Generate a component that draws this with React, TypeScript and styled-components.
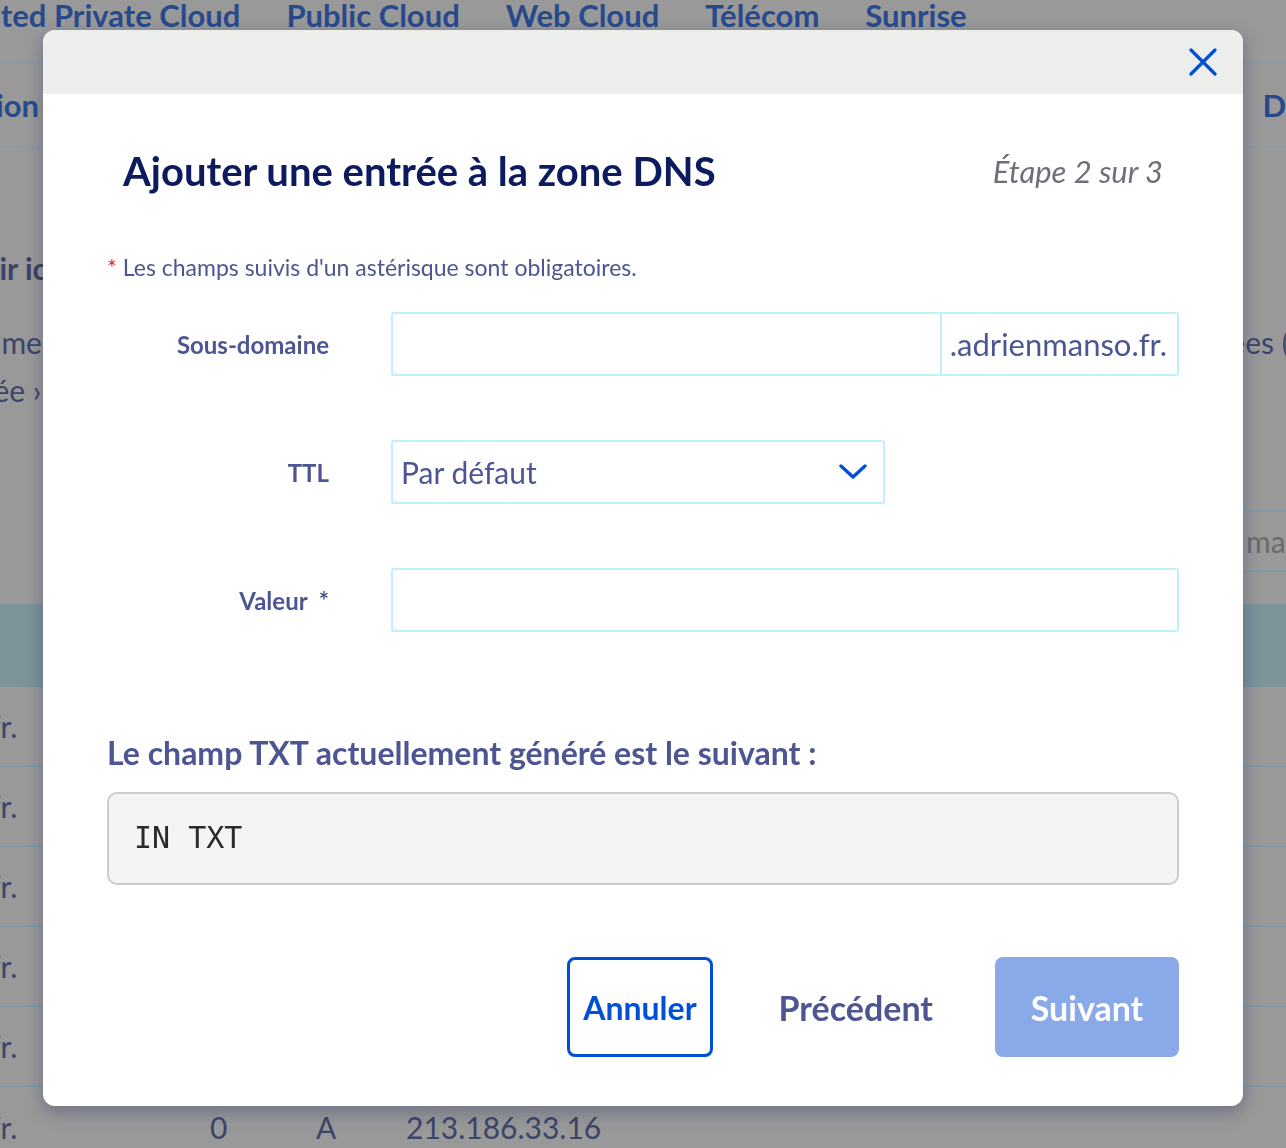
import * as React from "react";
import styled, { createGlobalStyle } from "styled-components";

const font = `Lato, "Noto Sans", sans-serif`;

const GlobalStyle = createGlobalStyle`
    html, body {
        margin: 0;
        padding: 0;
        width: 1286px;
        height: 1148px;
        overflow: hidden;
        background: #999999;
        font-family: ${font};
    }
    * { box-sizing: border-box; }
`;

/* ---------- dimmed page behind the dialog ---------- */

const Page = styled.div`
    width: 1286px;
    height: 1148px;
    overflow: hidden;
    background: #999999;
    display: flex;
    flex-direction: column;
    & > * { flex-shrink: 0; }
`;

const TopNav = styled.div`
    height: 61px;
    display: flex;
    gap: 46px;
    margin-left: -54px;
`;

const NavItem = styled.span`
    font: 700 31px/30px ${font};
    color: #284a8d;
    white-space: nowrap;
`;

const SubNav = styled.div`
    height: 87px;
    border-top: 2px solid #8f98a6;
    border-bottom: 2px solid #8f98a6;
    display: flex;
    justify-content: space-between;
    align-items: center;
    margin-left: -124px;
    margin-right: -24px;
`;

const SubNavItem = styled.span`
    font: 700 31px ${font};
    color: #284a8d;
`;

const Body = styled.div`
    height: 456px;
    display: flex;
    justify-content: space-between;
`;

const BodyLeft = styled.div`
    margin-left: -60px;
    padding-top: 103px;
    display: flex;
    flex-direction: column;
    gap: 33px;
`;

const BgTitle = styled.div`
    font: 700 30px/34px ${font};
    color: #3a4466;
    white-space: nowrap;
`;

const BgText = styled.div`
    font: 400 30px/48px ${font};
    color: #3d4568;
    white-space: nowrap;
`;

const BodyRight = styled.div`
    display: flex;
    flex-direction: column;
    align-items: flex-end;
    margin-right: -32px;
    padding-top: 170px;
`;

const BgInput = styled.div`
    margin-top: 144px;
    margin-right: -28px;
    height: 62px;
    width: 170px;
    border-top: 2px solid #7d9aa6;
    border-bottom: 2px solid #7d9aa6;
    font: 400 30px/58px ${font};
    color: #6b6b6b;
    padding-left: 70px;
`;

const TableHead = styled.div`
    height: 83px;
    background: #7b9399;
`;

const TableRow = styled.div<{ last?: boolean }>`
    height: 80px;
    border-bottom: ${(p) => (p.last ? "none" : "2px solid #7d9aa6")};
    display: flex;
    align-items: center;
    margin-left: -10px;
    font: 400 30px ${font};
    color: #3d4568;
`;

const Cell = styled.span<{ w: number }>`
    width: ${(p) => p.w}px;
    white-space: nowrap;
`;

/* ---------- dialog ---------- */

const Overlay = styled.div`
    position: fixed;
    inset: 0;
    display: flex;
    justify-content: center;
    padding-top: 30px;
`;

const Dialog = styled.div`
    width: 1200px;
    height: 1076px;
    background: #ffffff;
    border-radius: 12px;
    box-shadow: 0 6px 18px rgba(30, 40, 90, 0.35);
    display: flex;
    flex-direction: column;
    overflow: hidden;
`;

const DialogHeader = styled.div`
    height: 64px;
    flex-shrink: 0;
    background: #eceeec;
    display: flex;
    justify-content: flex-end;
    align-items: center;
    padding-right: 24px;
`;

const CloseButton = styled.button`
    border: none;
    background: transparent;
    padding: 0;
    width: 32px;
    height: 32px;
    display: flex;
    align-items: center;
    justify-content: center;
    cursor: pointer;
`;

const DialogBody = styled.div`
    padding: 0 64px;
    display: flex;
    flex-direction: column;
`;

const TitleRow = styled.div`
    display: flex;
    justify-content: space-between;
    align-items: center;
    padding: 44px 16px 0 16px;
    height: 110px;
`;

const Title = styled.h2`
    margin: 0;
    font: 700 40px ${font};
    color: #0c1b5e;
`;

const Step = styled.span`
    font: italic 400 31px ${font};
    color: #6c7079;
`;

const RequiredNote = styled.p`
    margin: 49px 0 0 0;
    font: 400 23px/28px ${font};
    color: #4d5592;
`;

const Star = styled.span`
    color: #e2252f;
    margin-right: 6px;
`;

const Form = styled.div`
    display: flex;
    flex-direction: column;
    gap: 64px;
    margin-top: 31px;
`;

const FieldRow = styled.div`
    display: grid;
    grid-template-columns: 222px 1fr;
    gap: 62px;
    align-items: center;
`;

const Label = styled.label`
    text-align: right;
    font: 700 24px ${font};
    color: #4d5592;
    white-space: nowrap;
`;

const InputGroup = styled.div<{ width?: number }>`
    display: flex;
    height: 64px;
    width: ${(p) => (p.width ? `${p.width}px` : "100%")};
    border: 2px solid #bef1fb;
    border-radius: 3px;
`;

const TextInput = styled.input`
    flex: 1;
    min-width: 0;
    border: none;
    outline: none;
    background: transparent;
    font: 400 30px ${font};
    color: #4d5592;
    padding: 0 8px;
`;

const Suffix = styled.span`
    border-left: 2px solid #bef1fb;
    display: flex;
    align-items: center;
    padding: 0 10px 0 8px;
    font: 400 31px ${font};
    color: #4d5592;
`;

const SelectBox = styled.div`
    flex: 1;
    display: flex;
    align-items: center;
    justify-content: space-between;
    padding: 0 16px 0 8px;
    font: 400 30px ${font};
    color: #4d5592;
`;

const SectionTitle = styled.h3`
    margin: 102px 0 0 0;
    font: 700 32px/38px ${font};
    color: #4d5592;
`;

const CodeBox = styled.pre`
    margin: 20px 0 0 0;
    height: 93px;
    background: #f4f4f4;
    border: 2px solid #cccccc;
    border-radius: 10px;
    padding: 0 25px 2px 25px;
    display: flex;
    align-items: center;
    font: 400 30px "DejaVu Sans Mono", "Liberation Mono", monospace;
    color: #2b2b2b;
`;

const Actions = styled.div`
    display: flex;
    justify-content: flex-end;
    align-items: center;
    margin-top: 72px;
`;

type Variant = "outline" | "ghost" | "primary";

const Button = styled.button<{ variant: Variant }>`
    height: 100px;
    border-radius: 8px;
    font: 700 ${(p) => (p.variant === "outline" ? 32 : 34)}px ${font};
    cursor: pointer;
    padding: ${(p) => (p.variant === "ghost" ? "0" : "0 13px")};
    border: ${(p) => (p.variant === "outline" ? "3px solid #0050d7" : "none")};
    background: ${(p) => (p.variant === "primary" ? "#89a9e8" : "transparent")};
    color: ${(p) =>
        p.variant === "outline" ? "#0050d7" : p.variant === "primary" ? "#ffffff" : "#4d5592"};
    margin-left: ${(p) => (p.variant === "outline" ? 0 : p.variant === "ghost" ? 66 : 62)}px;
    min-width: ${(p) => (p.variant === "primary" ? 184 : 0)}px;
`;

const CloseIcon = () => (
    <svg width="28" height="28" viewBox="0 0 28 28">
        <path d="M2 2 L26 26 M26 2 L2 26" stroke="#0050d7" strokeWidth="3.2" strokeLinecap="round" />
    </svg>
);

const Chevron = () => (
    <svg width="28" height="18" viewBox="0 0 28 18">
        <path d="M2 3 L14 14 L26 3" fill="none" stroke="#0050d7" strokeWidth="3.4" strokeLinecap="round" strokeLinejoin="round" />
    </svg>
);

export default function App() {
    const rows = ["fr.", "fr.", "fr.", "fr.", "fr."];
    return (
        <>
            <GlobalStyle />
            <Page>
                <TopNav>
                    <NavItem>Hosted Private Cloud</NavItem>
                    <NavItem>Public Cloud</NavItem>
                    <NavItem>Web Cloud</NavItem>
                    <NavItem>Télécom</NavItem>
                    <NavItem>Sunrise</NavItem>
                </TopNav>
                <SubNav>
                    <SubNavItem>Information</SubNavItem>
                    <SubNavItem>DN</SubNavItem>
                </SubNav>
                <Body>
                    <BodyLeft>
                        <BgTitle>Servir ici</BgTitle>
                        <div>
                            <BgText>Comment</BgText>
                            <BgText>entrée ›</BgText>
                        </div>
                    </BodyLeft>
                    <BodyRight>
                        <BgText>entrées (A)</BgText>
                        <BgInput>mai</BgInput>
                    </BodyRight>
                </Body>
                <TableHead />
                {rows.map((r, i) => (
                    <TableRow key={i}>
                        <Cell w={40}>{r}</Cell>
                    </TableRow>
                ))}
                <TableRow last>
                    <Cell w={220}>fr.</Cell>
                    <Cell w={106}>0</Cell>
                    <Cell w={90}>A</Cell>
                    <Cell w={300}>213.186.33.16</Cell>
                </TableRow>
            </Page>

            <Overlay>
                <Dialog>
                    <DialogHeader>
                        <CloseButton aria-label="Fermer">
                            <CloseIcon />
                        </CloseButton>
                    </DialogHeader>
                    <DialogBody>
                        <TitleRow>
                            <Title>Ajouter une entrée à la zone DNS</Title>
                            <Step>Étape 2 sur 3</Step>
                        </TitleRow>
                        <RequiredNote>
                            <Star>*</Star>Les champs suivis d'un astérisque sont obligatoires.
                        </RequiredNote>
                        <Form>
                            <FieldRow>
                                <Label>Sous-domaine</Label>
                                <InputGroup>
                                    <TextInput />
                                    <Suffix>.adrienmanso.fr.</Suffix>
                                </InputGroup>
                            </FieldRow>
                            <FieldRow>
                                <Label>TTL</Label>
                                <InputGroup width={494}>
                                    <SelectBox>
                                        Par défaut
                                        <Chevron />
                                    </SelectBox>
                                </InputGroup>
                            </FieldRow>
                            <FieldRow>
                                <Label>Valeur&nbsp;&nbsp;*</Label>
                                <InputGroup>
                                    <TextInput />
                                </InputGroup>
                            </FieldRow>
                        </Form>
                        <SectionTitle>Le champ TXT actuellement généré est le suivant :</SectionTitle>
                        <CodeBox>IN TXT</CodeBox>
                        <Actions>
                            <Button variant="outline">Annuler</Button>
                            <Button variant="ghost">Précédent</Button>
                            <Button variant="primary">Suivant</Button>
                        </Actions>
                    </DialogBody>
                </Dialog>
            </Overlay>
        </>
    );
}
